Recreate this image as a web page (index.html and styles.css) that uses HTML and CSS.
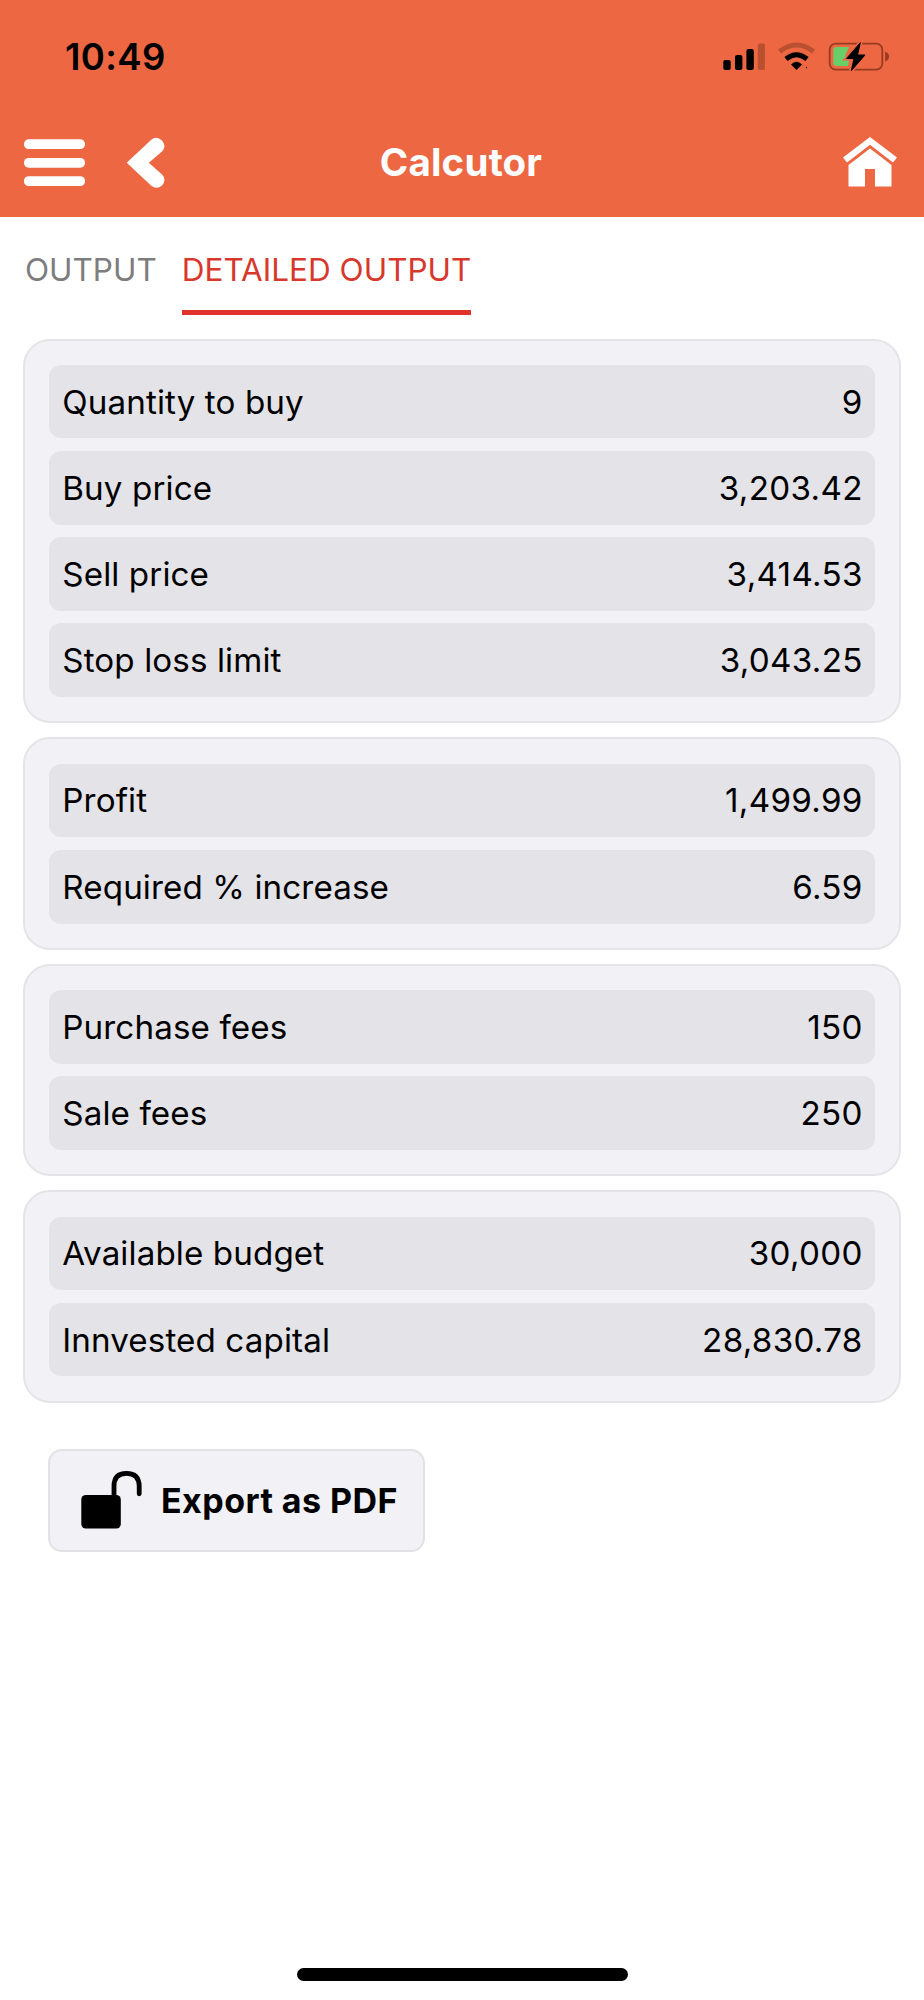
FILE: index.html
```html
<!DOCTYPE html>
<html lang="en">
<head>
    <meta charset="UTF-8">
    <meta name="viewport" content="width=device-width, initial-scale=1.0">
    <title>Calcutor</title>
    <link rel="stylesheet" href="styles.css">
</head>
<body>
    <header class="header">
        <div class="status-bar">
            <span class="time">10:49</span>
            <div class="status-icons">
                <svg class="signal" viewBox="724 43 42 28" width="42" height="28">
                    <rect x="724.3" y="60" width="7.4" height="10" rx="2"/>
                    <rect x="736" y="55" width="7.4" height="15" rx="2"/>
                    <rect x="747.4" y="49" width="7.4" height="21" rx="2"/>
                    <rect x="758.8" y="43.5" width="7.2" height="26.5" rx="2" fill="#b9502f"/>
                </svg>
                <svg class="wifi" viewBox="778 42 39 29" width="39" height="29">
                    <path d="M780.5 51.5Q797.5 38.5 814.5 51.5" fill="none" stroke="#b9502f" stroke-width="5"/>
                    <path d="M787 59Q797.5 50.5 808 59" fill="none" stroke="#000" stroke-width="5"/>
                    <path d="M792 64.5Q797.5 59 803 64.5L797.5 70Z"/>
                    <circle cx="807.5" cy="67.5" r="0.7"/>
                </svg>
                <svg class="battery" viewBox="828 41 62 31" width="62" height="31">
                    <rect x="829.7" y="43.7" width="52.6" height="26" rx="6" fill="none" stroke="#963c20" stroke-width="1.8"/>
                    <path d="M885.2 51.5Q889 53 889 56.5T885.2 61.5Z" fill="#963c20"/>
                    <path d="M836 47H849L845 56H850L848 66H836Q833.3 66 833.3 63V50Q833.3 47 836 47Z" fill="#68ce67"/>
                    <path d="M860.5 42.5L846.5 58.5H854L851 71L865.3 55H857.5Z" stroke="#ed6743" stroke-width="4"/>
                    <path d="M860.3 42.7L846.5 58.5H854L851.3 70.7L865 55H857.5Z" stroke="#000" stroke-width="1" stroke-linejoin="round"/>
                </svg>
            </div>
        </div>
        <nav class="nav-bar">
            <div class="nav-left">
                <svg class="menu-icon" viewBox="24 137 61 51" width="61" height="51">
                    <rect x="24" y="139.3" width="61" height="9.8" rx="4.6"/>
                    <rect x="24" y="157.9" width="61" height="9.8" rx="4.6"/>
                    <rect x="24" y="176.2" width="61" height="9.8" rx="4.6"/>
                </svg>
                <svg class="back-icon" viewBox="126 137 39 51" width="39" height="51">
                    <path d="M126.7 162.8L151 140Q156.5 135.5 162 140.5Q167 146.5 162 151.5L148.8 162.8L162 174.5Q167 179.5 162 185.5Q156.5 190 151 185.5Z"/>
                </svg>
            </div>
            <h1 class="title">Calcutor</h1>
            <svg class="home-icon" viewBox="842 136 56 52" width="56" height="52">
                <path d="M870 137L897 157.5L893 162.5L870 144.8L847 162.5L843 157.5Z"/>
                <path d="M870 148.5L891.5 165V186.5H875V169H865V186.5H848.5V165Z"/>
            </svg>
        </nav>
    </header>

    <div class="tabs">
        <div class="tab">OUTPUT</div>
        <div class="tab active">DETAILED OUTPUT</div>
    </div>

    <main class="content">
        <section class="card">
            <div class="row"><span>Quantity to buy</span><span class="value">9</span></div>
            <div class="row"><span>Buy price</span><span class="value">3,203.42</span></div>
            <div class="row"><span>Sell price</span><span class="value">3,414.53</span></div>
            <div class="row"><span>Stop loss limit</span><span class="value">3,043.25</span></div>
        </section>
        <section class="card">
            <div class="row"><span>Profit</span><span class="value">1,499.99</span></div>
            <div class="row"><span>Required % increase</span><span class="value">6.59</span></div>
        </section>
        <section class="card">
            <div class="row"><span>Purchase fees</span><span class="value">150</span></div>
            <div class="row"><span>Sale fees</span><span class="value">250</span></div>
        </section>
        <section class="card">
            <div class="row"><span>Available budget</span><span class="value">30,000</span></div>
            <div class="row"><span>Innvested capital</span><span class="value">28,830.78</span></div>
        </section>

        <button class="export-btn">
            <svg class="lock-icon" viewBox="81 1470 61 60" width="61" height="60">
                <rect x="81.3" y="1495" width="39.5" height="33.5" rx="4.5"/>
                <path d="M114 1498V1486Q114 1473.3 126.5 1473.3T139.2 1486V1493.8" fill="none" stroke="#000" stroke-width="4.8" stroke-linecap="round"/>
            </svg>
            <span>Export as PDF</span>
        </button>
    </main>

    <div class="home-indicator"></div>
</body>
</html>
```

FILE: styles.css
```css
* {
    box-sizing: border-box;
}

body {
    margin: 0;
    height: 2000px;
    display: flex;
    flex-direction: column;
    font-family: Inter, 'Liberation Sans', sans-serif;
    background-color: #fff;
    color: #000;
}

svg {
    display: block;
    flex-shrink: 0;
}

.header {
    height: 217px;
    background-color: #ed6743;
}

.status-bar {
    height: 113px;
    padding: 0 34px 0 65px;
    display: flex;
    align-items: center;
    justify-content: space-between;
}

.time {
    font-size: 36.5px;
    font-weight: 600;
    letter-spacing: 0.4px;
}

.status-icons {
    display: flex;
    align-items: center;
    gap: 12px;
}

.nav-bar {
    height: 98px;
    padding: 0 26px 0 24px;
    display: grid;
    grid-template-columns: 1fr auto 1fr;
    align-items: center;
    fill: #fff;
}

.nav-left {
    display: flex;
    gap: 41px;
}

.title {
    margin: 0;
    font-size: 38.5px;
    font-weight: 700;
    letter-spacing: 0.2px;
    color: #fff;
}

.home-icon {
    justify-self: end;
}

.tabs {
    display: flex;
    gap: 25px;
    padding: 25px 25px 0;
}

.tab {
    height: 73px;
    padding-top: 8px;
    font-size: 31.5px;
    line-height: 40px;
    color: #7d7d7d;
    white-space: nowrap;
}

.tab.active {
    color: #d8382c;
    border-bottom: 5px solid #e03329;
}

.content {
    flex: 1;
    display: flex;
    flex-direction: column;
    gap: 14px;
    padding: 23.5px 23px 0;
}

.card {
    display: flex;
    flex-direction: column;
    gap: 12.5px;
    padding: 24.3px;
    background-color: #f1f1f6;
    border: 2px solid #e4e4e8;
    border-radius: 27px;
}

.row {
    height: 73.7px;
    padding: 0 12px 0 13px;
    display: flex;
    align-items: center;
    justify-content: space-between;
    background-color: #e4e3e8;
    border-radius: 12px;
    font-size: 33.2px;
    letter-spacing: 0.1px;
}

.value {
    letter-spacing: 0.3px;
}

.export-btn {
    width: 377px;
    height: 103px;
    margin: 32px 0 0 25px;
    padding: 0 0 0 31px;
    display: flex;
    align-items: center;
    gap: 19px;
    font-family: inherit;
    font-size: 34px;
    font-weight: 700;
    letter-spacing: 0.45px;
    color: #000;
    white-space: nowrap;
    background-color: #f1f1f6;
    border: 2px solid #e2e2e4;
    border-radius: 14px;
}

.home-indicator {
    width: 331px;
    height: 13px;
    margin: 0 auto 19px;
    background-color: #000;
    border-radius: 7px;
}
```
